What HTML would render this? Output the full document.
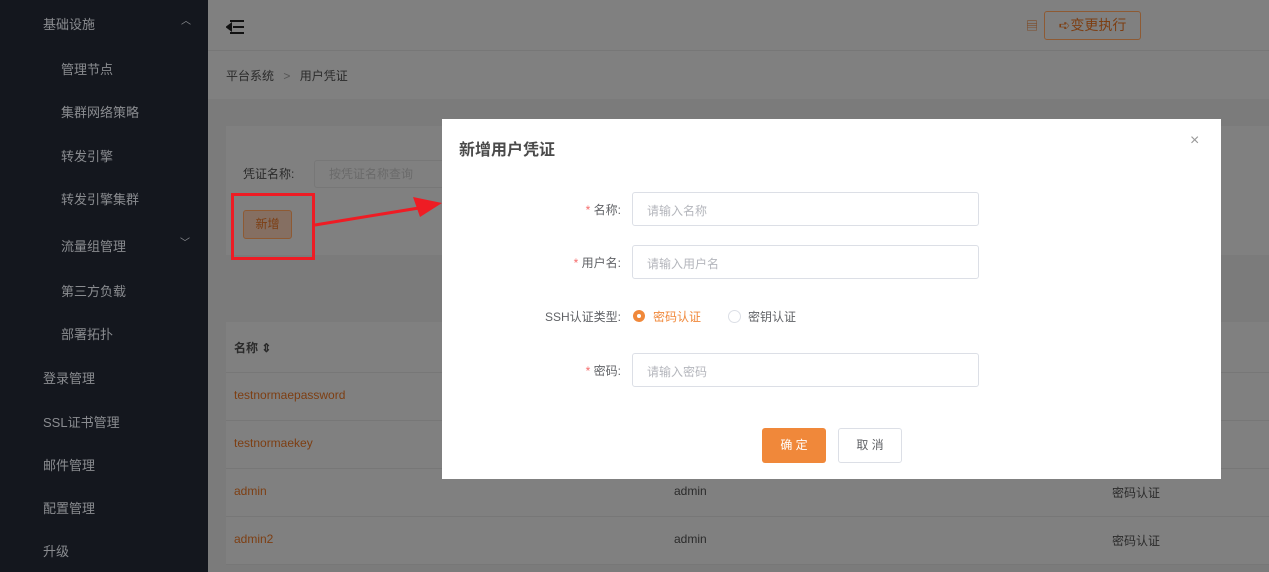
<!DOCTYPE html><html><head><meta charset="utf-8"><style>
body{margin:0;width:1269px;height:572px;overflow:hidden;position:relative;background:#7b7b7b;font-family:"Liberation Sans","Noto Sans CJK SC",sans-serif;font-size:13px}
.a{position:absolute}
.side{left:0;top:0;width:208px;height:572px;background:#14171e;color:#8a8c90}
.side div{position:absolute;font-size:13px}
.hdr{left:208px;top:0;width:1061px;height:50px;background:#808080;border-bottom:1px solid #777}
.bc{left:208px;top:51px;width:1061px;height:48px;background:#808080;color:#2a2a2a}
.card{background:#808080}
.row{left:226px;width:1043px;height:47px;border-bottom:1px solid #777;background:#808080}
.row span{position:absolute;top:15px;font-size:12px}
.o{color:#7d3e12}
.modal{left:442px;top:119px;width:779px;height:360px;background:#fff}
.inp{position:absolute;left:190px;width:347px;height:34px;border:1px solid #dcdfe6;border-radius:3px;color:#b4b6bc;box-sizing:border-box;padding:9px 14px;font-size:12px}
.st{color:#f56c6c}
</style></head><body>
<div class="a side">
<div style="left:43px;top:14px">基础设施</div><div style="left:181px;top:12px;font-size:10px">︿</div>
<div style="left:61px;top:59px">管理节点</div>
<div style="left:61px;top:102px">集群网络策略</div>
<div style="left:61px;top:146px">转发引擎</div>
<div style="left:61px;top:189px">转发引擎集群</div>
<div style="left:61px;top:236px">流量组管理</div><div style="left:180px;top:234px;font-size:10px">﹀</div>
<div style="left:61px;top:281px">第三方负载</div>
<div style="left:61px;top:324px">部署拓扑</div>
<div style="left:43px;top:368px">登录管理</div>
<div style="left:43px;top:412px">SSL证书管理</div>
<div style="left:43px;top:455px">邮件管理</div>
<div style="left:43px;top:498px">配置管理</div>
<div style="left:43px;top:541px">升级</div>
</div>
<div class="a hdr">
<svg class="a" style="left:18px;top:19px" width="19" height="16"><path d="M4 2h14M7 8h11M4 14h14M1 8l4-3v6z" stroke="#111" stroke-width="2" fill="#111"/></svg>
<div class="a" style="left:818px;top:17px;color:#7d3e12;font-size:12px">▤</div>
<div class="a" style="left:836px;top:11px;width:95px;height:27px;border:1px solid #8e5a33;border-radius:3px;color:#7d3e12;font-size:14px;line-height:27px;text-align:center">➪变更执行</div>
</div>
<div class="a bc"><span class="a" style="left:18px;top:16px;font-size:12px">平台系统 <span style="color:#555;margin:0 6px">&gt;</span> 用户凭证</span></div>
<div class="a card" style="left:226px;top:126px;width:1043px;height:129px">
<span class="a" style="left:17px;top:39px;color:#2a2a2a;font-size:12px">凭证名称:</span>
<div class="a" style="left:88px;top:34px;width:200px;height:26px;border:1px solid #777;border-radius:3px;color:#6a6a6a;font-size:12px;line-height:26px;padding-left:14px">按凭证名称查询</div>
<div class="a" style="left:17px;top:84px;width:47px;height:27px;border:1px solid #8e5a33;border-radius:3px;color:#7d3e12;font-size:12px;line-height:27px;text-align:center;background:#856f62">新增</div>
</div>
<div class="a" style="left:231px;top:193px;width:78px;height:61px;border:3px solid #ee1c24"></div>
<svg class="a" style="left:310px;top:195px" width="135" height="35"><path d="M5 30L115 12" stroke="#ee1c24" stroke-width="3"/><path d="M103 2L132 8 110 22z" fill="#ee1c24"/></svg>
<div class="a row" style="top:322px;height:50px"><span style="left:8px;top:17px;color:#2a2a2a;font-weight:bold">名称 ⇕</span></div>
<div class="a row" style="top:373px"><span class="o" style="left:8px">testnormaepassword</span></div>
<div class="a row" style="top:421px"><span class="o" style="left:8px">testnormaekey</span></div>
<div class="a row" style="top:469px"><span class="o" style="left:8px">admin</span><span style="left:448px;color:#2a2a2a">admin</span><span style="left:886px;color:#2a2a2a">密码认证</span></div>
<div class="a row" style="top:517px"><span class="o" style="left:8px">admin2</span><span style="left:448px;color:#2a2a2a">admin</span><span style="left:886px;color:#2a2a2a">密码认证</span></div>
<div class="a modal">
<div class="a" style="left:17px;top:17px;font-size:16px;font-weight:bold;color:#4a4a4a">新增用户凭证</div>
<div class="a" style="left:748px;top:13px;font-size:16px;color:#999">×</div>
<div class="a" style="left:0;top:82px;width:179px;text-align:right;color:#606266;font-size:12px"><span class="st">* </span>名称:</div>
<div class="inp" style="top:73px">请输入名称</div>
<div class="a" style="left:0;top:135px;width:179px;text-align:right;color:#606266;font-size:12px"><span class="st">* </span>用户名:</div>
<div class="inp" style="top:126px">请输入用户名</div>
<div class="a" style="left:0;top:189px;width:179px;text-align:right;color:#606266;font-size:12px">SSH认证类型:</div>
<div class="a" style="left:191px;top:191px;width:12px;height:12px;border-radius:50%;background:#f0883a"><div class="a" style="left:4px;top:4px;width:4px;height:4px;border-radius:50%;background:#fff"></div></div>
<div class="a" style="left:211px;top:189px;color:#f0883a;font-size:12px">密码认证</div>
<div class="a" style="left:286px;top:191px;width:11px;height:11px;border-radius:50%;border:1px solid #dcdfe6"></div>
<div class="a" style="left:306px;top:189px;color:#606266;font-size:12px">密钥认证</div>
<div class="a" style="left:0;top:243px;width:179px;text-align:right;color:#606266;font-size:12px"><span class="st">* </span>密码:</div>
<div class="inp" style="top:234px">请输入密码</div>
<div class="a" style="left:320px;top:309px;width:64px;height:35px;background:#f0883a;border-radius:3px;color:#fff;line-height:35px;text-align:center;font-size:12px">确 定</div>
<div class="a" style="left:396px;top:309px;width:62px;height:33px;border:1px solid #dcdfe6;border-radius:3px;color:#606266;line-height:33px;text-align:center;font-size:12px">取 消</div>
</div>
</body></html>
